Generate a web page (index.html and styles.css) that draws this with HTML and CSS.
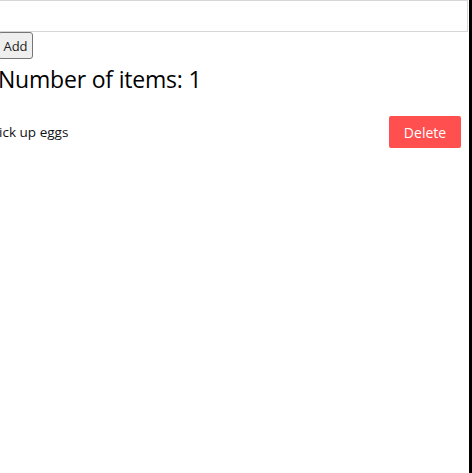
FILE: index.html
```html
<!DOCTYPE html>
<html>
<head>
<meta charset="utf-8">
<link rel="stylesheet" href="styles.css">
</head>
<body>
<div class="frame">
  <input class="new-item" type="text">
  <button class="add-btn">Add</button>
  <h1 class="count">Number of items: 1</h1>
  <div class="item">
    <span class="item-text">Pick up eggs</span>
    <button class="delete-btn">Delete</button>
  </div>
</div>
</body>
</html>
```

FILE: styles.css
```css
html, body {
  margin: 0;
  padding: 0;
  background: #000;
}
.frame {
  width: 469px;
  height: 473px;
  background: #fff;
  overflow: hidden;
  font-family: "Open Sans", "Noto Sans", sans-serif;
  color: #000;
}
.new-item {
  display: block;
  box-sizing: border-box;
  width: 480px;
  height: 32px;
  margin: 0 0 0 -12px;
  border: 1px solid #d6d6d6;
  background: #fff;
  outline: none;
}
.add-btn {
  display: block;
  box-sizing: border-box;
  height: 27px;
  width: 35px;
  margin-left: -2px;
  padding: 0;
  font-family: "Open Sans", sans-serif;
  font-size: 13px;
  color: #222;
  background: #efefef;
  border: 1px solid #767676;
  border-radius: 3px;
}
.count {
  margin: 4px 0 0 -2px;
  font-size: 23px;
  font-weight: 400;
  line-height: 32px;
  letter-spacing: -0.2px;
}
.item {
  display: flex;
  justify-content: space-between;
  align-items: center;
  margin: 21px 8px 0 -9px;
}
.item-text {
  font-size: 13.5px;
  color: #111;
}
.delete-btn {
  box-sizing: border-box;
  width: 72px;
  height: 32px;
  border: none;
  border-radius: 2px;
  background: #ff4f4f;
  color: #fff;
  font-family: "Open Sans", sans-serif;
  font-size: 14px;
}
```
